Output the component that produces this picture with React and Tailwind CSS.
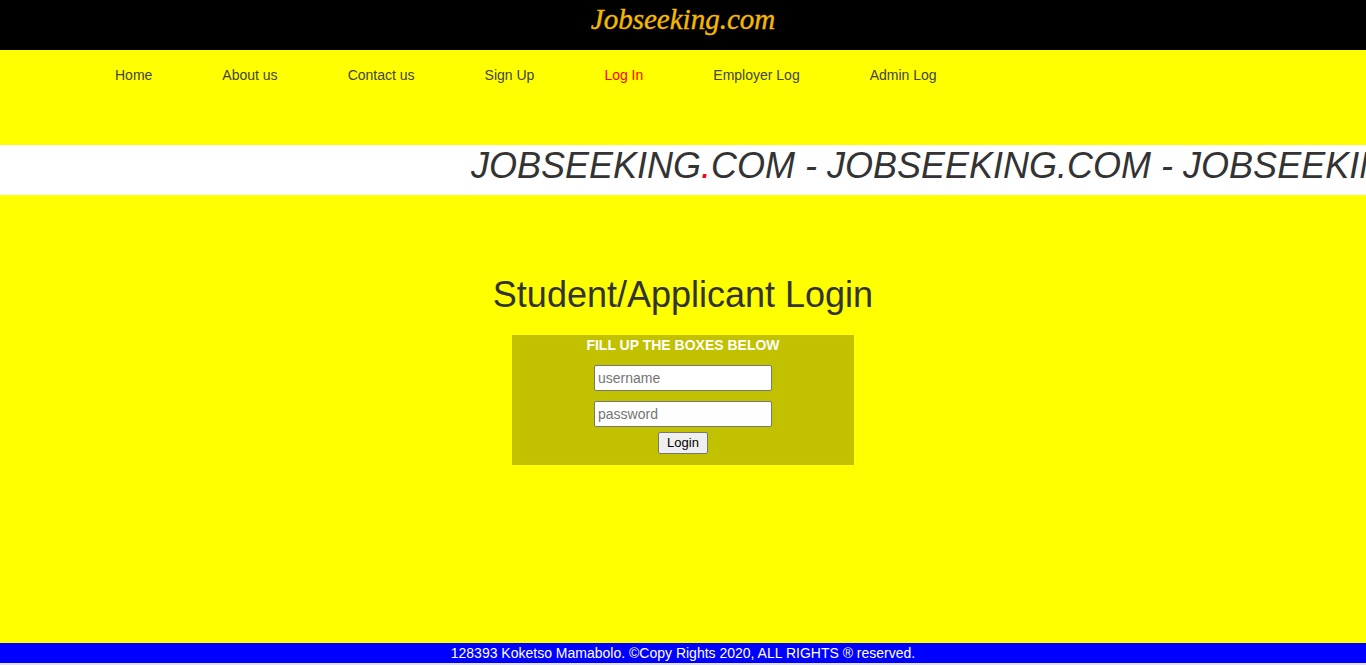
export default function App() {
  const links = ["Home", "About us", "Contact us", "Sign Up", "Log In", "Employer Log", "Admin Log"];
  return (
    <div className="w-full min-h-[665px] flex flex-col bg-[#ffff00] font-['Liberation_Sans',Arial,sans-serif]">
      <header className="h-[50px] bg-black flex items-start justify-center">
        <span className="mt-[2px] text-[29px] leading-[34px] italic text-[#f3b800] font-['Liberation_Serif','Times_New_Roman',serif] [-webkit-text-stroke:0.4px_#f3b800]">
          Jobseeking.com
        </span>
      </header>
      <nav className="h-[95px] flex items-start pl-[80px] pt-[16px]">
        {links.map((l) => (
          <a
            key={l}
            className={`px-[35px] text-[14px] leading-[18px] ${l === "Log In" ? "text-[#ff0000]" : "text-[#444]"}`}
          >
            {l}
          </a>
        ))}
      </nav>
      <div className="h-[50px] bg-white overflow-hidden flex items-start">
        <div className="pl-[471px] pt-[1px] whitespace-nowrap italic text-[36px] leading-[40px] text-[#333]">
          JOBSEEKING<span className="text-[#ff0000]">.</span>COM - JOBSEEKING.COM - JOBSEEKING.COM - JOBSEEKING.COM
        </div>
      </div>
      <main className="flex-1 flex flex-col items-center">
        <h1 className="mt-[75px] text-[36px] leading-[50px] text-[#333]">Student/Applicant Login</h1>
        <div className="mt-[15px] w-[342px] h-[130px] bg-[#c2c100] flex flex-col items-center">
          <div className="mt-[2px] text-[14px] leading-[16px] font-bold text-white">FILL UP THE BOXES BELOW</div>
          <input
            placeholder="username"
            className="mt-[12px] w-[178px] h-[26px] bg-white border border-[#767676] rounded-[2px] px-[3px] text-[14px] text-black placeholder:text-[#757575]"
          />
          <input
            placeholder="password"
            className="mt-[10px] w-[178px] h-[26px] bg-white border border-[#767676] rounded-[2px] px-[3px] text-[14px] text-black placeholder:text-[#757575]"
          />
          <button className="mt-[5px] w-[50px] h-[22px] bg-[#efefef] border border-[#767676] rounded-[2px] text-[13px] leading-[18px] text-black">
            Login
          </button>
        </div>
      </main>
      <footer className="h-[20px] bg-[#0000ff] flex items-center justify-center text-white text-[14px] leading-[20px]">
        128393 Koketso Mamabolo. ©Copy Rights 2020, ALL RIGHTS ® reserved.
      </footer>
      <div className="h-[2px] bg-[#e0e0e0]" />
    </div>
  );
}
